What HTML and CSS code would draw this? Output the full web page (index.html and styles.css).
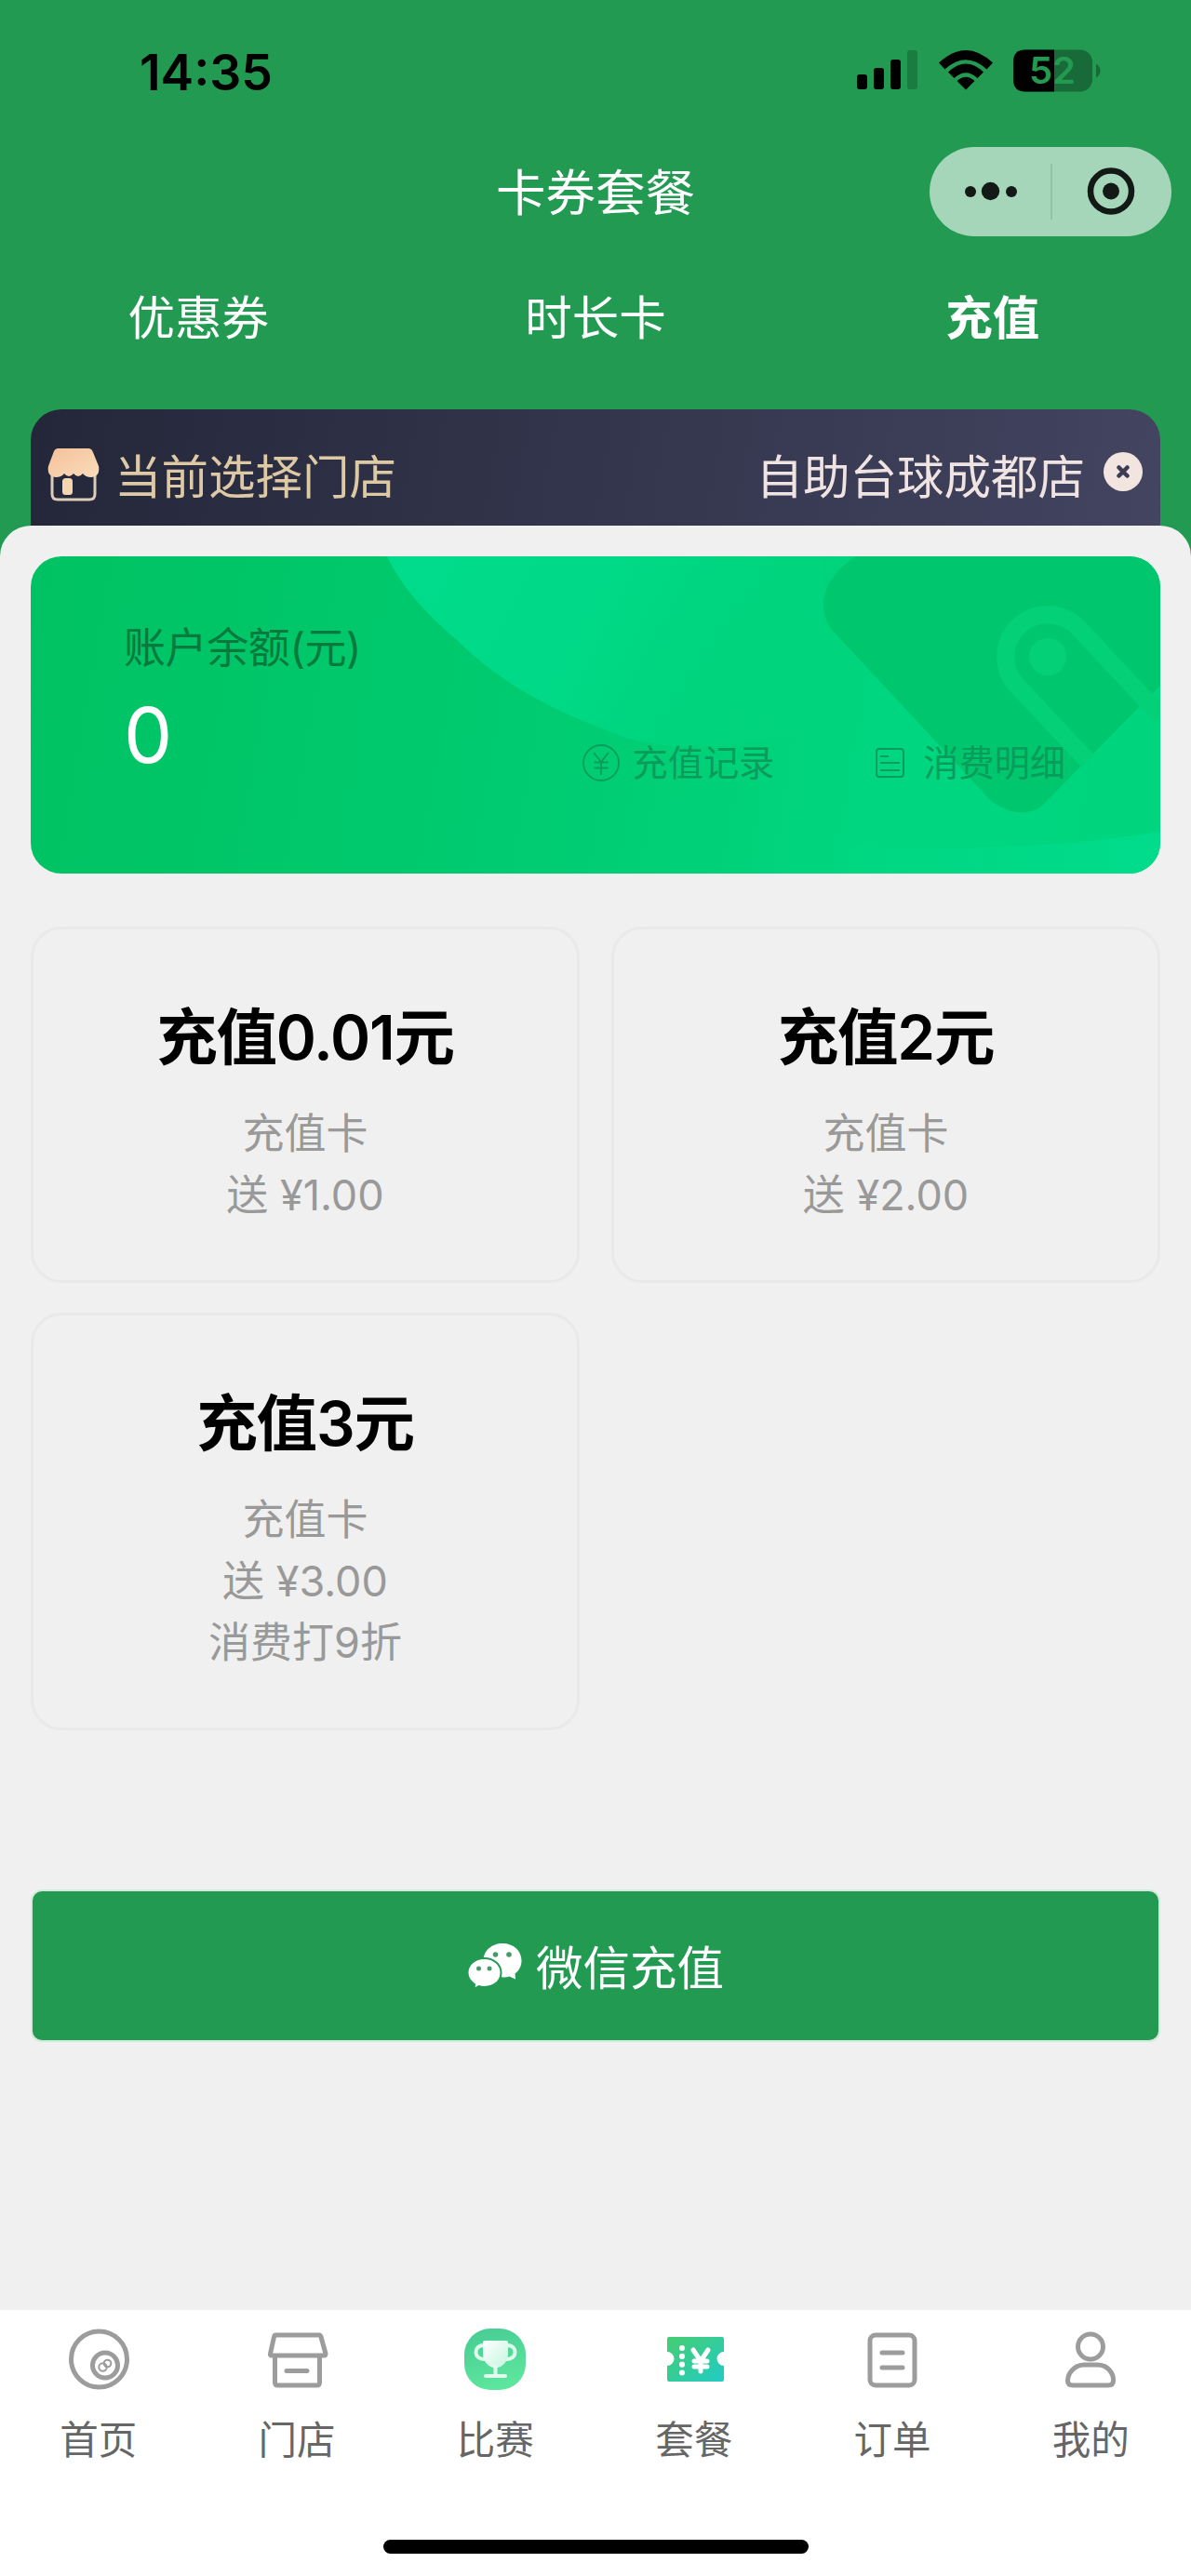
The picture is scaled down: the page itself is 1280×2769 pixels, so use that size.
FILE: index.html
```html
<!DOCTYPE html>
<html lang="zh-CN">
<head>
  <meta charset="UTF-8" />
  <meta name="viewport" content="width=device-width, initial-scale=1.0"/>
  <title>卡券套餐</title>
  <link rel="stylesheet" href="styles.css">
</head>
<body>
  <div class="header">
    <div class="status-bar">
      <div class="time">14:35</div>
      <div class="status-icons">
        <svg width="66" height="46" viewBox="0 0 66 46">
          <rect x="0" y="27" width="11" height="16" rx="3"/>
          <rect x="18" y="20" width="11" height="23" rx="3"/>
          <rect x="36" y="11" width="11" height="32" rx="3"/>
          <rect x="54" y="1" width="11" height="42" rx="3" opacity="0.2"/>
        </svg>
        <svg width="58" height="46" viewBox="0 0 58 46">
          <path d="M0 14.500 Q29 -12.500 58 14.500 L51.500 21.500 Q29 1 6.500 21.500 Z"/>
          <path d="M10 24.500 Q29 6.500 48 24.500 L41.500 31 Q29 19.500 16.500 31 Z"/>
          <path d="M19.500 34 Q29 25.500 38.500 34 L29 43.500 Z"/>
        </svg>
        <svg class="battery" width="94" height="46" viewBox="0 0 94 46">
          <rect x="0" y="0.500" width="85" height="45" rx="13" opacity="0.3"/>
          <path d="M13 0.500 H44 V45.500 H13 Q0 45.500 0 32.500 V13.500 Q0 0.500 13 0.500 Z"/>
          <path d="M89 15.500 Q93.500 18 93.500 23 Q93.500 28 89 30.500 Z" opacity="0.3"/>
          <text class="battery-text" x="42" y="37" text-anchor="middle">52</text>
        </svg>
      </div>
    </div>
    <div class="nav-bar">
      <div class="nav-title">卡券套餐</div>
      <div class="capsule">
        <svg width="260" height="96" viewBox="0 0 260 96">
          <circle cx="44" cy="48" r="6"/>
          <circle cx="65.500" cy="47.500" r="9.700"/>
          <circle cx="88" cy="48" r="6"/>
          <rect x="130" y="18" width="2" height="60" fill="#8fc5a5"/>
          <circle cx="195" cy="47.500" r="22" fill="none" stroke="#131a15" stroke-width="6.500"/>
          <circle cx="195" cy="47.500" r="9"/>
        </svg>
      </div>
    </div>
    <div class="tabs">
      <div class="tab">优惠券</div>
      <div class="tab">时长卡</div>
      <div class="tab active">充值</div>
    </div>
    <div class="store-bar">
      <svg class="store-icon" width="56" height="60" viewBox="0 0 56 60">
        <defs>
          <linearGradient id="roof" x1="0" y1="0" x2="1" y2="1">
            <stop offset="0" stop-color="#f3c19a"/>
            <stop offset="1" stop-color="#fbdcba"/>
          </linearGradient>
        </defs>
        <path d="M5 30 V50 Q5 56 11 56 H45 Q51 56 51 50 V30" fill="none" stroke="#dcccb8" stroke-width="3"/>
        <path d="M11 1 H44 Q47 1 48.500 4 L55 20 Q57 31 47 32 Q41 32 38 28 Q33 34 28 28 Q23 34 18 28 Q15 32 9 32 Q-1 31 1 20 L7 4 Q8.500 1 11 1 Z" fill="url(#roof)"/>
        <rect x="16" y="33" width="11" height="18" rx="3.500" fill="#f5d5b0"/>
      </svg>
      <div class="store-label">当前选择门店</div>
      <div class="store-name">自助台球成都店</div>
      <svg width="42" height="42" viewBox="0 0 42 42">
        <circle cx="21" cy="21" r="21" fill="#f2e4df"/>
        <path d="M16.500 16.500 L25.500 25.500 M25.500 16.500 L16.500 25.500" stroke="#3c3d55" stroke-width="4.500" stroke-linecap="round"/>
      </svg>
    </div>
  </div>

  <main class="main-content">
    <div class="balance-card">
      <svg class="balance-bg" width="1214" height="341" viewBox="0 0 1214 341">
        <defs>
          <linearGradient id="bubble" x1="383" y1="0" x2="850" y2="240" gradientUnits="userSpaceOnUse">
            <stop offset="0" stop-color="#00dc8c"/>
            <stop offset="0.450" stop-color="#00d986"/>
            <stop offset="1" stop-color="#00d67f" stop-opacity="0"/>
          </linearGradient>
          <linearGradient id="corner" x1="850" y1="0" x2="1214" y2="0" gradientUnits="userSpaceOnUse">
            <stop offset="0" stop-color="#00dc8c" stop-opacity="0"/>
            <stop offset="1" stop-color="#00dc8c"/>
          </linearGradient>
        </defs>
        <path d="M383 0 C398 32 425 62 457 89 C505 137 560 166 640 195 C700 213 780 205 850 180 V0 Z" fill="url(#bubble)"/>
        <path d="M820 306 Q1030 325 1214 296 V341 H820 Z" fill="url(#corner)"/>
        <path d="M887 0 C855 20 841 52 862 80 L1022 252 C1040 275 1070 283 1088 267 L1214 139 V0 Z" fill="#00c76d"/>
        <path d="M1136 220 L1060 139 A45 45 0 0 1 1126 77 L1214 171" fill="none" stroke="#04d077" stroke-width="19"/>
        <circle cx="1093" cy="108" r="20" fill="#04d077"/>
      </svg>
      <div class="balance-info">
        <div class="balance-label">账户余额(元)</div>
        <div class="balance-value">0</div>
      </div>
      <div class="balance-links">
        <div class="balance-link">
          <svg width="40" height="40" viewBox="0 0 40 40" fill="none" stroke="#0a9c5a" stroke-width="1.800">
            <circle cx="20" cy="20" r="19"/>
            <path d="M12 9 L20 19 L28 9 M20 19 V33 M12.500 19.500 H27.500 M12.500 25.500 H27.500"/>
          </svg>
          <span>充值记录</span>
        </div>
        <div class="balance-link">
          <svg width="32" height="40" viewBox="0 0 32 40" fill="none" stroke="#0a9c5a" stroke-width="2">
            <rect x="1" y="5" width="29" height="30" rx="3"/>
            <path d="M5 13 H14 M5 20 H26 M5 28 H26"/>
          </svg>
          <span>消费明细</span>
        </div>
      </div>
    </div>

    <div class="packages">
      <div class="package">
        <h3>充值0.01元</h3>
        <p>充值卡</p>
        <p>送 ¥1.00</p>
      </div>
      <div class="package">
        <h3>充值2元</h3>
        <p>充值卡</p>
        <p>送 ¥2.00</p>
      </div>
      <div class="package">
        <h3>充值3元</h3>
        <p>充值卡</p>
        <p>送 ¥3.00</p>
        <p>消费打9折</p>
      </div>
    </div>

    <button class="pay-btn">
      <svg width="60" height="52" viewBox="0 0 60 52">
        <path d="M38 1 C50 1 58.500 9 58.500 19.500 C58.500 26 55.500 30.500 51.500 33.500 L52 39.500 L45.500 36.500 Q41 38 35 37 C25 36 17.500 28.500 17.500 19.500 C17.500 9 26.500 1 38 1 Z" fill="#fff"/>
        <path d="M18.500 17 C29 17 36.500 24 36.500 32.500 C36.500 41.500 29 48 18.500 48 Q15.500 48 12.500 47 L7.500 50 L8 45 C3.500 42 0.500 38 0.500 32.500 C0.500 24 8 17 18.500 17 Z" fill="#fff" stroke="#239a51" stroke-width="2"/>
        <circle cx="30.500" cy="13" r="2.800" fill="#4a9a68"/>
        <circle cx="45" cy="13" r="2.800" fill="#4a9a68"/>
        <circle cx="12.500" cy="28" r="2.500" fill="#4a9a68"/>
        <circle cx="24" cy="28" r="2.500" fill="#4a9a68"/>
      </svg>
      <span>微信充值</span>
    </button>
  </main>

  <div class="tabbar">
    <div class="tabbar-items">
      <div class="tabbar-item">
        <svg width="70" height="70" viewBox="0 0 70 70" fill="none" stroke="#9c9c9c" stroke-width="5">
          <circle cx="35.500" cy="35" r="30"/>
          <circle cx="42" cy="41.500" r="13.500"/>
          <circle cx="44.500" cy="39.500" r="3.800" stroke-width="2"/>
          <circle cx="39.500" cy="43.500" r="4.200" stroke-width="2"/>
        </svg>
        <span>首页</span>
      </div>
      <div class="tabbar-item">
        <svg width="70" height="70" viewBox="0 0 70 70" fill="none" stroke="#9c9c9c" stroke-width="5" stroke-linejoin="round" stroke-linecap="round">
          <path d="M12 9 H59 Q60.500 9 61 11 L66 29 Q66 31 64 31 H8 Q6 31 6.500 29 L10.500 11 Q11 9 12 9 Z"/>
          <path d="M11.500 32 V60 Q11.500 63 14.500 63 H56.500 Q59.500 63 59.500 60 V32 M24 47.500 H46"/>
        </svg>
        <span>门店</span>
      </div>
      <div class="tabbar-item">
        <svg width="70" height="70" viewBox="0 0 70 70">
          <defs>
            <linearGradient id="cup" x1="0" y1="0" x2="0.300" y2="1">
              <stop offset="0" stop-color="#46cb93"/>
              <stop offset="1" stop-color="#5ce59d"/>
            </linearGradient>
            <linearGradient id="cupBody" x1="0" y1="0" x2="1" y2="1">
              <stop offset="0" stop-color="#fff"/>
              <stop offset="1" stop-color="#c5f5df"/>
            </linearGradient>
          </defs>
          <rect x="2" y="2" width="66" height="66" rx="28" fill="url(#cup)"/>
          <path d="M23 20 C11 20 12 36 24 35 M48 20 C60 20 59 36 47 35" fill="none" stroke="#dffbee" stroke-width="4"/>
          <path d="M24 15 H47 Q49 15 49 17 V29 C49 38 42 44.500 35.500 44.500 C29 44.500 22 38 22 29 V17 Q22 15 24 15 Z" fill="url(#cupBody)"/>
          <path d="M35.500 43 V53 M25 53 H46" fill="none" stroke="#e4fbf0" stroke-width="4" stroke-linecap="round"/>
        </svg>
        <span>比赛</span>
      </div>
      <div class="tabbar-item">
        <svg width="70" height="70" viewBox="0 0 70 70">
          <defs>
            <linearGradient id="ticket" x1="0" y1="0" x2="1" y2="1">
              <stop offset="0" stop-color="#46cd70"/>
              <stop offset="1" stop-color="#21cbc5"/>
            </linearGradient>
          </defs>
          <path d="M8 11 H65 Q67 11 67 13 V27 A7.500 7.500 0 0 0 67 42 V57 Q67 59 65 59 H8 Q6 59 6 57 V42 A7.500 7.500 0 0 0 6 27 V13 Q6 11 8 11 Z" fill="url(#ticket)"/>
          <path d="M22 23 V52" stroke="#fff" stroke-width="6" stroke-linecap="round" stroke-dasharray="0.100 8.700"/>
          <path d="M34 25 L42 37 L50 25 M42 37 V48 M35 37 H49 M35 43 H49" fill="none" stroke="#fff" stroke-width="5" stroke-linecap="round"/>
        </svg>
        <span>套餐</span>
      </div>
      <div class="tabbar-item">
        <svg width="70" height="70" viewBox="0 0 70 70" fill="none" stroke="#9c9c9c" stroke-width="5" stroke-linecap="round">
          <rect x="11" y="9" width="48" height="54" rx="6"/>
          <path d="M24 28 H46 M24 44 H46"/>
        </svg>
        <span>订单</span>
      </div>
      <div class="tabbar-item">
        <svg width="70" height="70" viewBox="0 0 70 70" fill="none" stroke="#9c9c9c" stroke-width="5" stroke-linejoin="round">
          <circle cx="35" cy="21.500" r="13.500"/>
          <path d="M28 41 H43 C53 41 60 50 59.500 58 Q59.500 63 54 63 H16 Q10.500 63 10.500 58 C10.500 50 18 41 28 41 Z"/>
        </svg>
        <span>我的</span>
      </div>
    </div>
    <div class="home-indicator"></div>
  </div>
</body>
</html>
```
FILE: styles.css
```css
* {
  margin: 0;
  padding: 0;
  box-sizing: border-box;
  font-family: Inter, "Noto Sans CJK SC", sans-serif;
}

svg {
  display: block;
  flex-shrink: 0;
}

body {
  width: 1280px;
  height: 2769px;
  background: #f0f0f0;
  display: flex;
  flex-direction: column;
}

.header {
  background: #239a51;
  height: 598px;
  padding: 0 33px;
  flex-shrink: 0;
}

.status-bar {
  height: 152px;
  display: flex;
  justify-content: space-between;
  align-items: center;
  padding: 0 64px 0 117px;
}

.time {
  padding-top: 2px;
  font-size: 53.5px;
  font-weight: 600;
}

.status-icons {
  display: flex;
  gap: 22px;
}

.battery {
  overflow: visible;
}

.battery-text {
  font-size: 40px;
  font-weight: 600;
  fill: #239a51;
}

.nav-bar {
  height: 108px;
  display: grid;
  grid-template-columns: 1fr auto 1fr;
  align-items: center;
  margin: 0 -33px;
}

.nav-title {
  grid-column: 2;
  padding-bottom: 6px;
  font-size: 53.5px;
  color: white;
}

.capsule {
  justify-self: end;
  width: 260px;
  height: 96px;
  margin-right: 21px;
  border-radius: 48px;
  background: #a6d6b9;
  fill: #131a15;
}

.tabs {
  display: grid;
  grid-template-columns: repeat(3, 1fr);
  height: 180px;
  margin: 0 -33px;
  padding-top: 46px;
}

.tab {
  color: white;
  font-size: 50.5px;
  line-height: 72px;
  text-align: center;
}

.tab.active {
  font-weight: 700;
}

.store-bar {
  height: 158px;
  padding: 0 19px 24px 18px;
  display: flex;
  align-items: center;
  border-radius: 33px 33px 0 0;
  background: linear-gradient(100deg, #242639, #434561);
  font-size: 50.5px;
}

.store-icon {
  margin-top: 8px;
}

.store-label {
  color: #dec9a5;
  margin-left: 16px;
  padding-top: 3px;
}

.store-name {
  color: #f0e4e2;
  margin-left: auto;
  margin-right: 20px;
  padding-top: 3px;
}

.main-content {
  position: relative;
  flex: 1;
  margin-top: -33px;
  padding: 33px 33px 0;
  border-radius: 33px 33px 0 0;
  background: #f0f0f0;
}

.balance-card {
  position: relative;
  height: 341px;
  padding: 66px 102px 0 100px;
  border-radius: 33px;
  overflow: hidden;
  background: linear-gradient(100deg, #00c262, #00cb70 45%, #00d680 75%, #00d57e);
}

.balance-bg {
  position: absolute;
  top: 0;
  left: 0;
}

.balance-info,
.balance-links {
  position: relative;
}

.balance-label {
  color: #06793c;
  font-size: 45px;
  line-height: 66px;
  letter-spacing: -0.4px;
}

.balance-value {
  color: white;
  font-size: 83px;
  line-height: 120px;
}

.balance-links {
  display: flex;
  justify-content: flex-end;
  gap: 109px;
  margin-top: -58px;
}

.balance-link {
  display: flex;
  align-items: center;
  gap: 14px;
  color: #0a9c5a;
  font-size: 38.2px;
  line-height: 56px;
}

.balance-link + .balance-link {
  gap: 19px;
}

.packages {
  display: grid;
  grid-template-columns: 1fr 1fr;
  gap: 32px 34px;
  margin-top: 57px;
}

.package {
  border: 3px solid #e9e9e9;
  border-radius: 33px;
  padding: 69px 0 58px;
  text-align: center;
}

.package h3 {
  font-size: 65.5px;
  font-weight: 600;
  line-height: 96px;
  letter-spacing: -1.2px;
  margin-bottom: 22px;
}

.package p {
  color: #999;
  font-size: 45px;
  line-height: 66px;
}

.pay-btn {
  display: flex;
  width: 100%;
  height: 164px;
  margin-top: 171px;
  padding-bottom: 3px;
  align-items: center;
  justify-content: center;
  gap: 14px;
  border: 2px solid #d3e9db;
  border-radius: 12px;
  background: #239a51;
  color: white;
  font-size: 50.5px;
}

.pay-btn svg {
  margin-top: 5px;
}

.tabbar {
  height: 286px;
  background: white;
  flex-shrink: 0;
}

.tabbar-items {
  display: grid;
  grid-template-columns: repeat(6, 1fr);
  height: 247px;
  margin-left: -1px;
  margin-right: 1px;
  padding-top: 18px;
}

.tabbar-item {
  display: flex;
  flex-direction: column;
  align-items: center;
  gap: 22px;
  color: #666;
  font-size: 41.5px;
  line-height: 60px;
}

.home-indicator {
  width: 457px;
  height: 15px;
  margin: 0 auto;
  border-radius: 8px;
  background: black;
}
```
